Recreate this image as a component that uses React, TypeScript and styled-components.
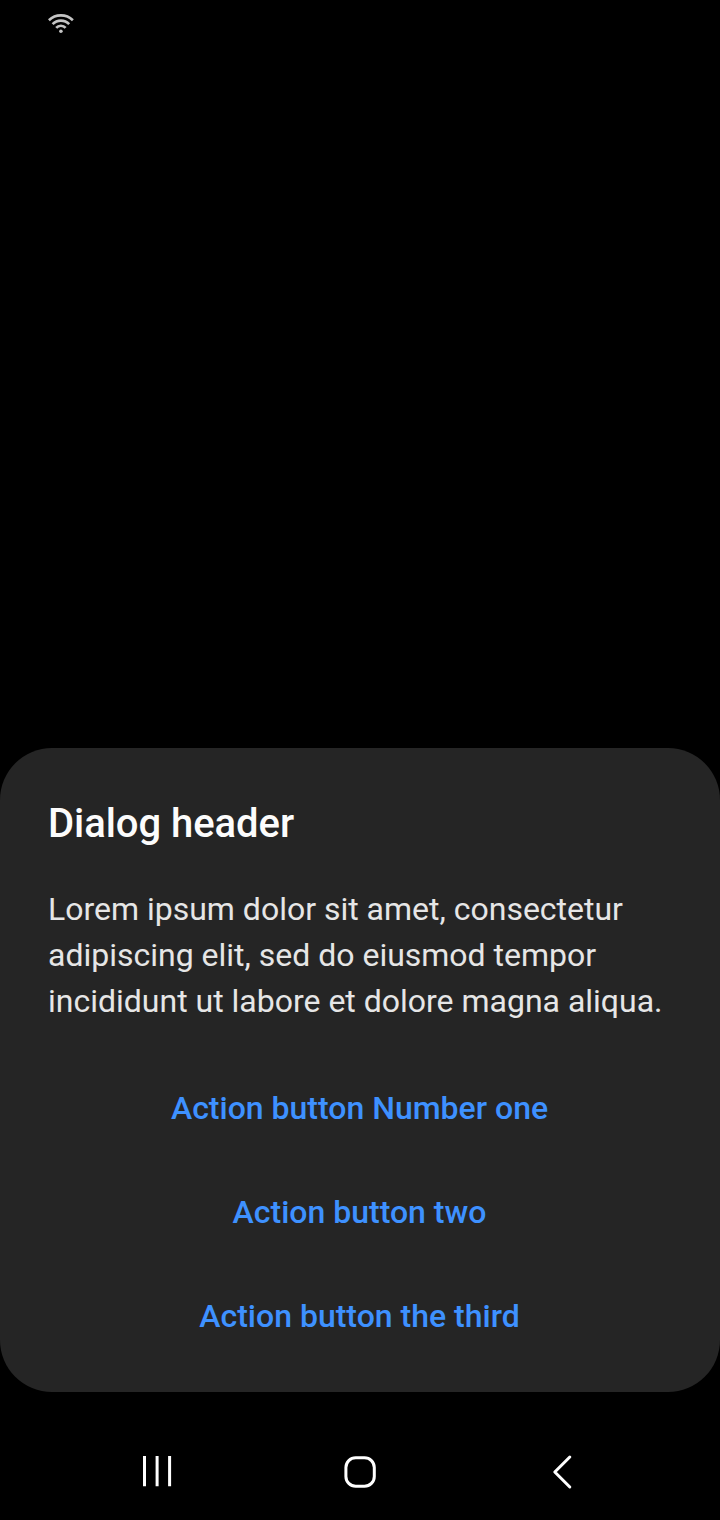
import React from "react";
import styled, { createGlobalStyle } from "styled-components";

const GlobalStyle = createGlobalStyle`
  * { box-sizing: border-box; }
  body { margin: 0; background: #000; font-family: Roboto, "Liberation Sans", sans-serif; }
`;

const Screen = styled.main`
  display: flex;
  flex-direction: column;
  width: 720px;
  height: 1520px;
  background: #000;
`;

const StatusBar = styled.header`
  flex: 1;
  padding: 14px 48px;
`;

const Dialog = styled.section`
  height: 644px;
  border-radius: 52px;
  background: #252525;
  padding: 49px 48px 24px;
`;

const Title = styled.h1`
  margin: 0;
  font-size: 40px;
  font-weight: 500;
  line-height: 54px;
  letter-spacing: -0.05px;
  color: #fcfcfc;
`;

const Message = styled.p`
  margin: 35px 0 0;
  font-size: 32px;
  line-height: 46px;
  letter-spacing: -0.005px;
  color: #e6e6e6;
  white-space: nowrap;
`;

const Actions = styled.div`
  display: flex;
  flex-direction: column;
  align-items: center;
  gap: 32px;
  margin-top: 48px;
`;

const ActionButton = styled.button`
  height: 72px;
  padding: 0 17px 0 16px;
  border: 0;
  background: none;
  font-family: inherit;
  font-size: 32px;
  font-weight: 500;
  color: #3e91ff;
  white-space: nowrap;
`;

const NavBar = styled.nav`
  display: flex;
  align-items: center;
  justify-content: space-between;
  height: 128px;
  padding: 32px 133px 0;
`;

const NavIcon = styled.svg`
  display: block;
  width: 48px;
  height: 48px;
  fill: none;
  stroke: #fff;
  stroke-width: 3;
`;

const WifiIcon = styled.svg`
  display: block;
  width: 26px;
  height: 20px;
  fill: none;
  stroke: #c4c4c4;
  stroke-width: 2.6;
`;

export default function App() {
  return (
    <>
      <GlobalStyle />
      <Screen>
        <StatusBar>
          <WifiIcon viewBox="0 0 26 20">
            <path d="M0.9 6.2Q5.9 1.4 12.9 1.4T24.9 6.2" />
            <path d="M4.6 10.2Q8 6.6 12.9 6.6T21.2 10.2" />
            <path d="M8.2 13.9Q10 11.8 12.9 11.8T17.6 13.9" />
            <circle cx="12.9" cy="17.2" r="1.8" fill="#c4c4c4" stroke="none" />
          </WifiIcon>
        </StatusBar>
        <Dialog>
          <Title>Dialog header</Title>
          <Message>
            Lorem ipsum dolor sit amet, consectetur<br />
            adipiscing elit, sed do eiusmod tempor<br />
            incididunt ut labore et dolore magna aliqua.
          </Message>
          <Actions>
            <ActionButton>Action button Number one</ActionButton>
            <ActionButton>Action button two</ActionButton>
            <ActionButton>Action button the third</ActionButton>
          </Actions>
        </Dialog>
        <NavBar>
          <NavIcon viewBox="0 0 48 48">
            <path d="M11.5 8V38.2M24.1 8V38.2M36.6 8V38.2" />
          </NavIcon>
          <NavIcon viewBox="0 0 48 48">
            <rect x="9.9" y="9.7" width="28.4" height="28.6" rx="9.8" />
          </NavIcon>
          <NavIcon viewBox="0 0 48 48" strokeLinecap="round" strokeLinejoin="round">
            <path d="M30.8 9L15.8 24L30.8 39" />
          </NavIcon>
        </NavBar>
      </Screen>
    </>
  );
}
